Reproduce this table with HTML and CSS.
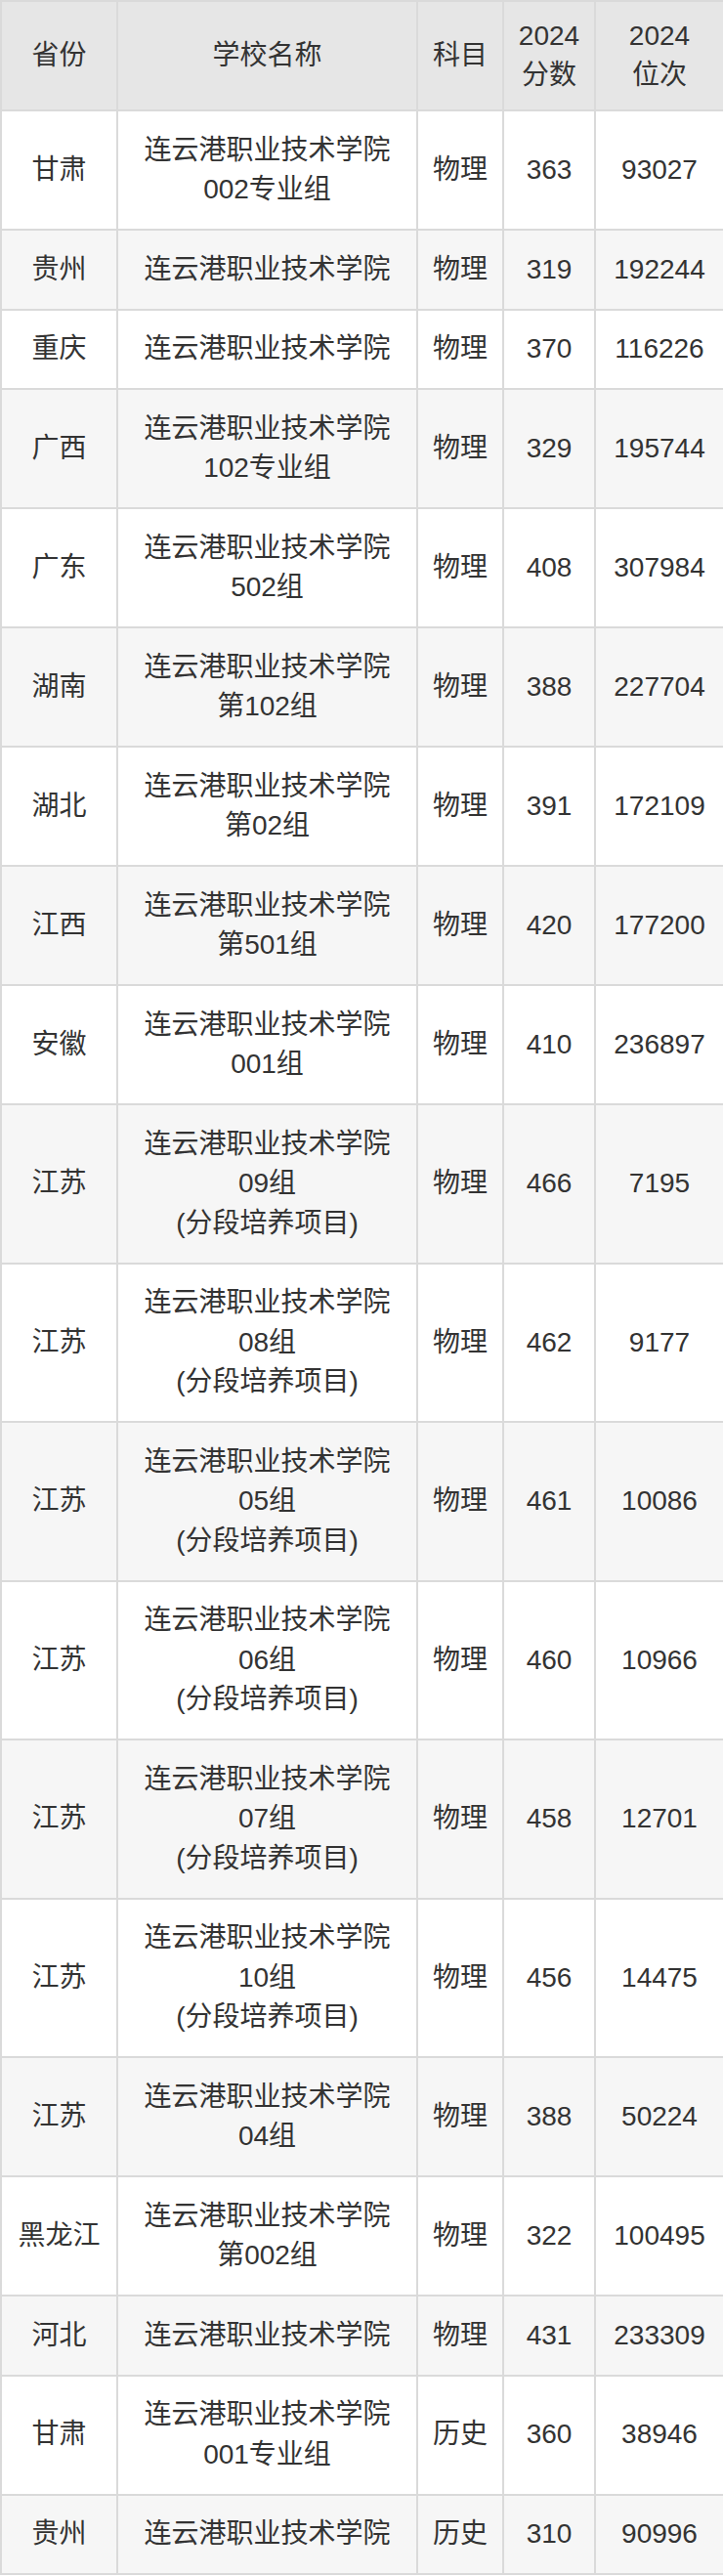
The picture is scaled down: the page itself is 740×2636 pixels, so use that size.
FILE: index.html
```html
<!DOCTYPE html>
<html lang="zh-CN">
<head>
<meta charset="utf-8">
<title>连云港职业技术学院 2024 分数线</title>
<link rel="stylesheet" href="styles.css">
</head>
<body>
<table class="score-table">
  <colgroup>
    <col class="c-prov">
    <col class="c-school">
    <col class="c-subj">
    <col class="c-score">
    <col class="c-rank">
  </colgroup>
  <thead>
    <tr>
      <th>省份</th>
      <th>学校名称</th>
      <th>科目</th>
      <th>2024<br>分数</th>
      <th>2024<br>位次</th>
    </tr>
  </thead>
  <tbody>
    <tr><td>甘肃</td><td>连云港职业技术学院<br>002专业组</td><td>物理</td><td>363</td><td>93027</td></tr>
    <tr><td>贵州</td><td>连云港职业技术学院</td><td>物理</td><td>319</td><td>192244</td></tr>
    <tr><td>重庆</td><td>连云港职业技术学院</td><td>物理</td><td>370</td><td>116226</td></tr>
    <tr><td>广西</td><td>连云港职业技术学院<br>102专业组</td><td>物理</td><td>329</td><td>195744</td></tr>
    <tr><td>广东</td><td>连云港职业技术学院<br>502组</td><td>物理</td><td>408</td><td>307984</td></tr>
    <tr><td>湖南</td><td>连云港职业技术学院<br>第102组</td><td>物理</td><td>388</td><td>227704</td></tr>
    <tr><td>湖北</td><td>连云港职业技术学院<br>第02组</td><td>物理</td><td>391</td><td>172109</td></tr>
    <tr><td>江西</td><td>连云港职业技术学院<br>第501组</td><td>物理</td><td>420</td><td>177200</td></tr>
    <tr><td>安徽</td><td>连云港职业技术学院<br>001组</td><td>物理</td><td>410</td><td>236897</td></tr>
    <tr><td>江苏</td><td>连云港职业技术学院<br>09组<br>(分段培养项目)</td><td>物理</td><td>466</td><td>7195</td></tr>
    <tr><td>江苏</td><td>连云港职业技术学院<br>08组<br>(分段培养项目)</td><td>物理</td><td>462</td><td>9177</td></tr>
    <tr><td>江苏</td><td>连云港职业技术学院<br>05组<br>(分段培养项目)</td><td>物理</td><td>461</td><td>10086</td></tr>
    <tr><td>江苏</td><td>连云港职业技术学院<br>06组<br>(分段培养项目)</td><td>物理</td><td>460</td><td>10966</td></tr>
    <tr><td>江苏</td><td>连云港职业技术学院<br>07组<br>(分段培养项目)</td><td>物理</td><td>458</td><td>12701</td></tr>
    <tr><td>江苏</td><td>连云港职业技术学院<br>10组<br>(分段培养项目)</td><td>物理</td><td>456</td><td>14475</td></tr>
    <tr><td>江苏</td><td>连云港职业技术学院<br>04组</td><td>物理</td><td>388</td><td>50224</td></tr>
    <tr><td>黑龙江</td><td>连云港职业技术学院<br>第002组</td><td>物理</td><td>322</td><td>100495</td></tr>
    <tr><td>河北</td><td>连云港职业技术学院</td><td>物理</td><td>431</td><td>233309</td></tr>
    <tr><td>甘肃</td><td>连云港职业技术学院<br>001专业组</td><td>历史</td><td>360</td><td>38946</td></tr>
    <tr><td>贵州</td><td>连云港职业技术学院</td><td>历史</td><td>310</td><td>90996</td></tr>
  </tbody>
</table>
</body>
</html>
```

FILE: styles.css
```css
html, body {
  margin: 0;
  padding: 0;
  background: #ffffff;
}

body {
  font-family: "Liberation Sans", Arial, "Noto Sans CJK SC", sans-serif;
  font-size: 28px;
  color: #333333;
}

.score-table {
  width: 740px;
  border-collapse: collapse;
  table-layout: fixed;
  border: 2px solid #dadada;
}

.c-prov { width: 119px; }
.c-school { width: 307px; }
.c-subj { width: 88px; }
.c-score { width: 94px; }
.c-rank { width: 132px; }

.score-table th,
.score-table td {
  border: 2px solid #dadada;
  text-align: center;
  vertical-align: middle;
  line-height: 40.5px;
  padding: 19.5px 4px;
  font-weight: normal;
  white-space: nowrap;
}

.score-table th {
  background: #e6e6e6;
  padding-top: 14.5px;
  padding-bottom: 14.5px;
}

.score-table tbody tr:nth-child(even) td {
  background: #f6f6f6;
}
```
